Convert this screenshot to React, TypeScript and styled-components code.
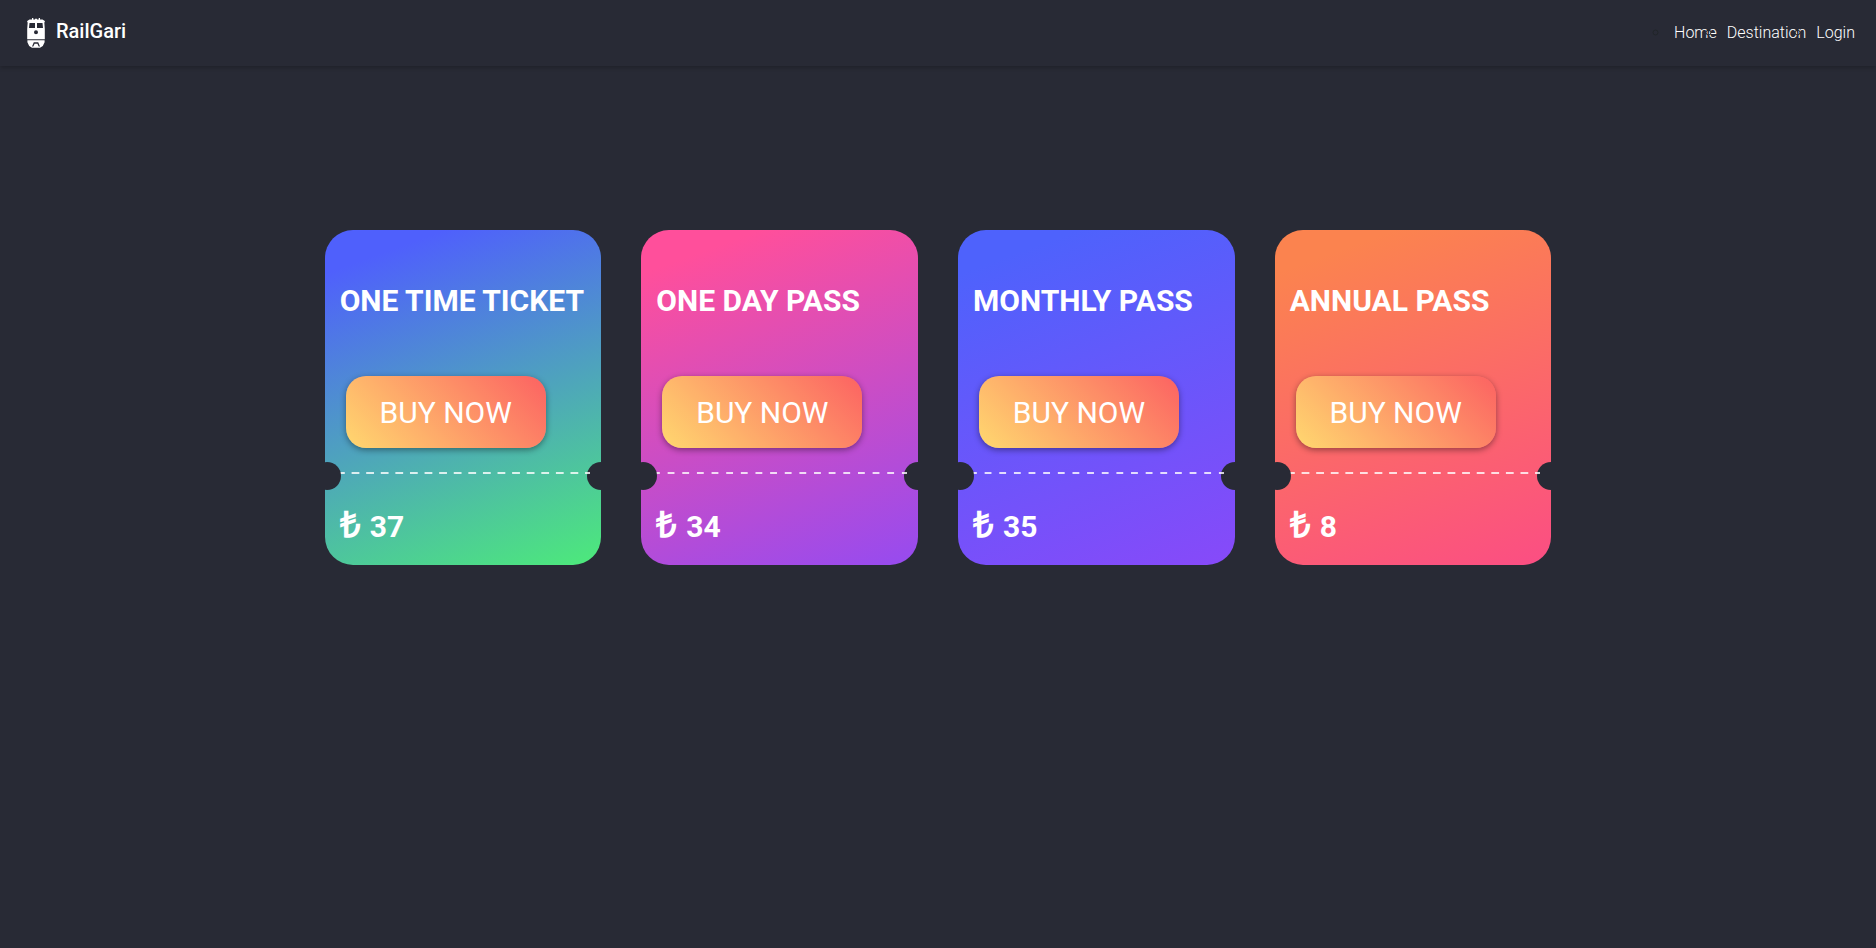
import React from "react";
import styled, { createGlobalStyle } from "styled-components";

const GlobalStyle = createGlobalStyle`
  *, *::before, *::after { box-sizing: border-box; }
  body {
    margin: 0;
    background: #282a35;
    color: #fff;
    font-family: Roboto, "Liberation Sans", sans-serif;
    font-size: 16px;
    line-height: 24px;
  }
`;

const Header = styled.header`
  display: flex;
  align-items: center;
  justify-content: space-between;
  height: 66px;
  padding: 0 21px 0 24px;
  box-shadow: 0 2px 4px rgba(0, 0, 0, 0.2);
`;

const Brand = styled.a`
  display: flex;
  align-items: center;
  gap: 8px;
  color: #fff;
  font-size: 20px;
  font-weight: 500;
  line-height: 30px;
  text-decoration: none;

  svg {
    width: 24px;
    height: 32px;
  }

  span {
    padding-bottom: 4px;
  }
`;

const NavList = styled.ul`
  display: flex;
  gap: 6px;
  margin: 0;
  padding: 0;
  color: #212529;
  list-style: circle;

  li {
    padding-left: 4px;
  }
`;

const NavLink = styled.a`
  color: #fff;
  font-weight: 300;
  text-decoration: none;
`;

const Passes = styled.main`
  display: grid;
  grid-template-columns: repeat(4, 1fr);
  gap: 40px;
  width: calc(200% / 3 - 24px);
  min-width: 1220px;
  margin: 164px auto 0;
`;

const Card = styled.article<{ $from: string; $to: string }>`
  overflow: hidden;
  padding: 48px 0 16px;
  border-radius: 28px;
  background: linear-gradient(160deg, ${(p) => p.$from} 10%, ${(p) => p.$to} 98%);
`;

const Title = styled.h2`
  margin: 0 0 52px;
  padding: 0 15px;
  font-size: 30px;
  font-weight: 700;
  line-height: 46px;
  white-space: nowrap;
`;

const BuyButton = styled.button`
  display: block;
  width: 200px;
  height: 72px;
  margin: 0 0 14px 21px;
  padding: 0;
  border: 0;
  border-radius: 20px;
  background: linear-gradient(45deg, #ffd86f, #fc6262);
  box-shadow: 0 2px 6px rgba(0, 0, 0, 0.4);
  color: #fff;
  font-family: inherit;
  font-size: 30px;
  font-weight: 400;
  cursor: pointer;
`;

const Perforation = styled.div`
  position: relative;
  height: 28px;
  padding: 10px 11px 0 12px;

  &::before,
  &::after {
    content: "";
    position: absolute;
    top: 0;
    width: 28px;
    height: 28px;
    border-radius: 50%;
    background: #282a35;
  }
  &::before {
    left: -12px;
    z-index: 2;
  }
  &::after {
    right: -14px;
  }
`;

const DashedLine = styled.div`
  position: relative;
  z-index: 1;
  height: 2px;
  background: linear-gradient(90deg, #fff 50%, transparent 50%) 0 0 / calc(300% / 52) 2px repeat-x;
  opacity: 0.8;
`;

const Price = styled.p`
  display: flex;
  align-items: baseline;
  gap: 9px;
  height: 59px;
  margin: 0;
  padding: 14px 15px 0;
  font-size: 30px;
  font-weight: 700;
  line-height: 45px;
`;

const Currency = styled.span`
  font-family: "Open Sans", sans-serif;
  font-size: 36px;
  line-height: 36px;
`;

function TrainIcon() {
  return (
    <svg viewBox="0 0 24 32" aria-hidden="true">
      <path
        fill="#fff"
        fillRule="evenodd"
        d="M8 1h1.300v1.500h1.700V1.800h2v.7h1.700V1H16v1.500h2.500L20.800 4v1.300h-.5l.5 6.700v10.300H3.200V12l.5-6.700h-.5V4l2.300-1.500H8zM5.500 6 5 11h6V6zM13 6v5h6l-.5-5zM12 13.300a2 2 0 1 0 0 4 2 2 0 0 0 0-4z"
      />
      <path
        fill="#fff"
        fillRule="evenodd"
        d="M3.400 23.200h17.200v2L18.800 29l-2.800 1.700H8L5.200 29l-1.800-3.800zM9.800 25.200 8 29.500h1.300l1.300-2.800h2.800l1.300 2.800H16l-1.800-4.300z"
      />
    </svg>
  );
}

const passes = [
  { title: "ONE TIME TICKET", price: 37, from: "#4f60fc", to: "#4de77d" },
  { title: "ONE DAY PASS", price: 34, from: "#ff4f9b", to: "#984bee" },
  { title: "MONTHLY PASS", price: 35, from: "#4e62fc", to: "#864af9" },
  { title: "ANNUAL PASS", price: 8, from: "#fb834f", to: "#fb4f82" },
];

export default function App() {
  return (
    <>
      <GlobalStyle />
      <Header>
        <Brand href="#">
          <TrainIcon />
          <span>RailGari</span>
        </Brand>
        <nav>
          <NavList>
            {["Home", "Destination", "Login"].map((label) => (
              <li key={label}>
                <NavLink href="#">{label}</NavLink>
              </li>
            ))}
          </NavList>
        </nav>
      </Header>
      <Passes>
        {passes.map((pass) => (
          <Card key={pass.title} $from={pass.from} $to={pass.to}>
            <Title>{pass.title}</Title>
            <BuyButton type="button">BUY NOW</BuyButton>
            <Perforation>
              <DashedLine />
            </Perforation>
            <Price>
              <Currency>₺</Currency>
              {pass.price}
            </Price>
          </Card>
        ))}
      </Passes>
    </>
  );
}
